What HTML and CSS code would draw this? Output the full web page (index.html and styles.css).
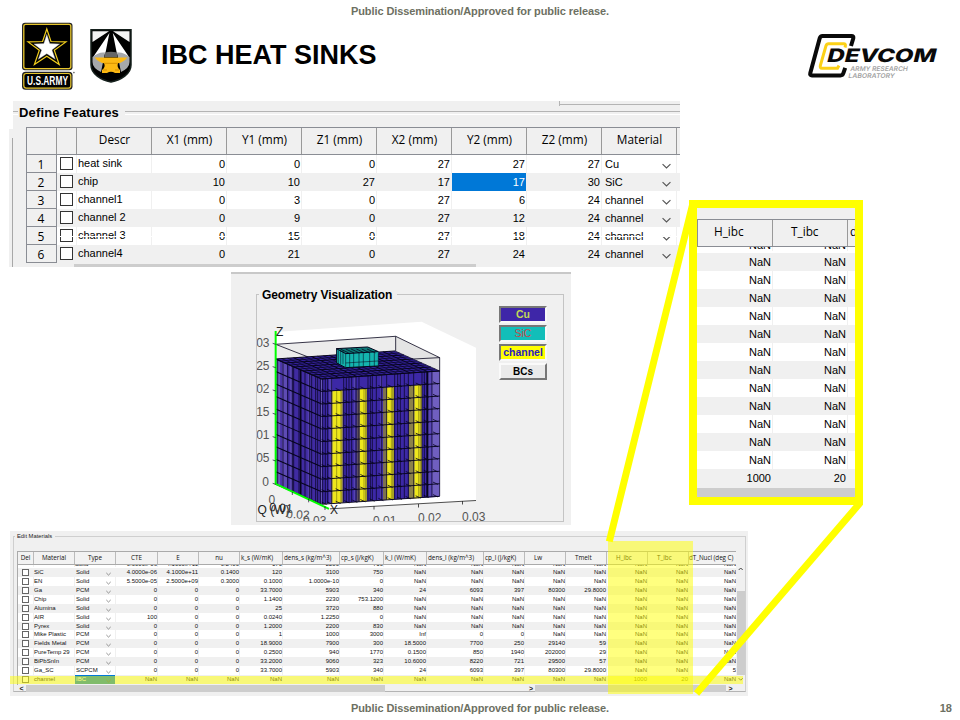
FILE: index.html
```
<!DOCTYPE html>
<html lang="en">
<head>
<meta charset="utf-8">
<title>IBC Heat Sinks</title>
<link rel="stylesheet" href="styles.css">
</head>
<body>
<div class="slide">
  <header class="header">
    <p class="release">Public Dissemination/Approved for public release.</p>
    <div class="banner">
      <svg class="army" width="54" height="70" viewBox="21 21 54 70">
        <rect x="22" y="22.7" width="50.5" height="47.6" rx="3" fill="#222"/>
        <rect x="23.8" y="24.4" width="47" height="44.2" rx="2" fill="#000" stroke="#e6c52c" stroke-width="1.3"/>
        <polygon points="46.8,29 51,41.5 66,41.9 54.3,50.3 59.2,64.5 46.8,56.2 34.4,64.5 39.3,50.3 28,41.9 42.6,41.5" fill="#000" stroke="#f0cd1c" stroke-width="1.2"/>
        <polygon points="46.8,34.3 49.8,43.6 59.7,43.9 52,49.9 55.3,59.3 46.8,53.8 38.3,59.3 41.6,49.9 33.9,43.9 43.8,43.6" fill="#fff" stroke="#999" stroke-width=".4"/>
        <rect x="22" y="71.8" width="50.5" height="18" rx="3.5" fill="#222"/>
        <rect x="23.8" y="73.5" width="47" height="14.6" rx="2.5" fill="#000" stroke="#e6c52c" stroke-width="1.2"/>
        <text x="27" y="84.9" class="army-text" textLength="41" lengthAdjust="spacingAndGlyphs">U.S.ARMY</text>
        <circle cx="73.9" cy="72.6" r=".8" fill="#555"/>
      </svg>
      <svg class="shield" width="44" height="56" viewBox="89 28 44 56">
        <path d="M91 29.7H131V65C131 74 121 80 111 82C101 80 91 74 91 65Z" fill="#000" stroke="#16211d" stroke-width="1.5"/>
        <path d="M92.5 31.2H109L92.5 42Z M113 31.2H129.5V42Z" fill="#f4f4f4"/>
        <path d="M109.4 33L105.2 54.3Q98 54.2 93.5 56.5Z M112.8 33L117 54.3Q124 54.2 128.7 56.5Z" fill="#fff"/>
        <path d="M92.5 57Q99 51.5 105 52.6L101 72Q92.5 68 92.5 62Z M129.5 57Q123 51.5 117 52.6L121 72Q129.5 68 129.5 62Z" fill="#a6a8ab"/>
        <path d="M105 52.5Q111 51.2 117 52.5L117.6 57H104.4Z" fill="#666"/>
        <path d="M94.5 57.5H127.5Q123 62.7 118 63.3Q116.5 67 120 70V73H115Q111 70.5 107 73H102V70Q106 67 104 63.3Q99 62.7 94.5 57.5Z" fill="#fdb913"/>
        <path d="M104 63.3H118M103 70H107M115 70H119" stroke="#d79000" fill="none"/>
      </svg>
      <h1 class="title">IBC HEAT SINKS</h1>
      <svg class="devcom" width="132" height="46" viewBox="807 33 132 46">
        <path d="M851 46L853.3 38.3Q853.8 36 851.5 36H822.5Q820.3 36 819.7 38.3L810.3 73Q809.6 75.4 812 75.4H840.5Q842.7 75.4 843.4 73L845.2 67.8" fill="none" stroke="#0a0a0a" stroke-width="4"/>
        <path d="M845 47.5L845.4 46Q845.8 43.8 843.8 43.8H828.6Q826.6 43.8 826 45.8L820.4 65.4Q819.7 68.3 822 68.3H837.5L839 65.5" fill="none" stroke="#fcd116" stroke-width="3"/>
        <rect x="827.5" y="48.3" width="18" height="15" fill="#fff"/>
        <g transform="translate(826 62.3) skewX(-14)"><text class="devcom-text" textLength="109" lengthAdjust="spacingAndGlyphs">DEVCOM</text></g>
        <g transform="translate(850 71.1) skewX(-10)"><text class="lab-text" textLength="57.5" lengthAdjust="spacingAndGlyphs">ARMY RESEARCH</text></g>
        <g transform="translate(848 77.8) skewX(-10)"><text class="lab-text" textLength="46.5" lengthAdjust="spacingAndGlyphs">LABORATORY</text></g>
      </svg>
    </div>
  </header>

  <main>
    <section class="features">
      <h2 class="legend">Define Features</h2>
      <div class="ftable" id="features"></div>
      <div class="fscroll"><i></i></div>
    </section>

    <section class="geometry">
      <div class="frame">
        <h2 class="legend">Geometry Visualization</h2>
        <svg id="plot" class="plot" width="235" height="226" viewBox="257 294 235 226">
          <polygon points="275,331 421.6,320.7 476,346.7 476,499.5 330,508 275,484" fill="#fff"/>
          <g id="mesh" transform="translate(255 317.3) scale(.33333)"></g>
          <g class="axis">
            <path d="M330 507.8L476 499.5M374 505v3.5M418.5 503v3.5M462.5 500v3.5" stroke="#222" fill="none" stroke-width=".8"/>
            <g text-anchor="end">
              <text x="269.5" y="345.5">0.03</text><text x="269.5" y="368.5">0.025</text>
              <text x="269.5" y="391.5">0.02</text><text x="269.5" y="414.5">0.015</text>
              <text x="269.5" y="438">0.01</text><text x="269.5" y="461">0.005</text>
              <text x="269" y="485">0</text>
            </g>
            <text x="276" y="335" class="dark">Z</text><text x="330" y="513" class="dark">X</text>
            <text x="268.5" y="502.5">0</text>
            <text x="257.5" y="512.5" class="dark">Q (W)</text>
            <text x="269" y="510" class="dark" transform="rotate(4 269 510)">0.01</text>
            <text x="286" y="517" transform="rotate(3 286 517)">0.02</text>
            <text x="303" y="523.5">0.03</text>
            <text x="373" y="523.5">0.01</text><text x="418" y="521">0.02</text><text x="462" y="519.5">0.03</text>
          </g>
        </svg>
        <div class="keys">
          <button class="key cu">Cu</button>
          <button class="key sic">SiC</button>
          <button class="key channel">channel</button>
          <button class="key bcs">BCs</button>
        </div>
      </div>
    </section>

    <section class="materials">
      <h2 class="mlegend">Edit Materials</h2>
      <div class="mbody">
        <div class="mtable" id="materials"></div>
        <div class="vscroll"><svg width="9" height="125" viewBox="0 0 9 125"><path d="M2.7 11l2-2 2 2M2.7 119.2l2 2 2-2" stroke="#444" fill="none"/></svg><i></i></div>
      </div>
      <div class="hscroll"><b>&lt;</b><i class="t1"></i><b class="mid">&gt;</b><i class="t2"></i><b>&gt;</b></div>
      <div class="hl-row"></div>
      <div class="hl-col"></div>
    </section>
  </main>

  <footer class="footer"><p class="release">Public Dissemination/Approved for public release.</p><span class="page">18</span></footer>

  <svg class="leaders" width="960" height="720" viewBox="0 0 960 720">
    <path d="M692.5 205L609.3 541.5M860 503L696.5 693.5" stroke="#ff0" stroke-width="7" fill="none"/>
  </svg>
  <aside class="callout" id="callout"></aside>
</div>
<script src="app.js"></script>
</body>
</html>
```
FILE: styles.css
```
* { box-sizing: border-box; }
body { margin: 0; background: #fff; font-family: "Liberation Sans", Arial, sans-serif; color: #000; }
h1, h2, p { margin: 0; }
.slide { position: relative; width: 960px; height: 720px; overflow: hidden; display: flex; flex-direction: column; }

.header { height: 101px; }
.release { text-align: center; font: bold 11px/14px "Liberation Sans", sans-serif; color: #6d7062; letter-spacing: -.1px; padding-top: 4px; }
.banner { display: flex; padding: 3px 21px 0; align-items: flex-start; }
.shield { margin: 7px 0 0 14px; }
.title { flex: 1; margin-left: 28px; padding-top: 17px; font: bold 27px/34px "Liberation Sans", sans-serif; white-space: nowrap; }
.devcom { margin-top: 12px; }
.army-text { font: bold 12px "Liberation Sans", sans-serif; fill: #fff; }
.devcom-text { font: 800 18.5px Inter, sans-serif; fill: #0a0a0a; }
.lab-text { font: 600 6.6px Inter, sans-serif; fill: #a3a3a3; }

.legend { position: absolute; background: #f0f0f0; font: bold 13px/16px "Liberation Sans", sans-serif; white-space: nowrap; }

.features { position: relative; width: 667px; height: 166px; margin-left: 13px; padding: 26px 0 0 13px; background: linear-gradient(#b4b4b4, #b4b4b4) 547px 3px / 120px 1px no-repeat, linear-gradient(#b4b4b4, #b4b4b4) 546px 0 / 1px 5px no-repeat, #f0f0f0; }
.features::before { content: ""; position: absolute; left: 0; right: 0; top: 10px; height: 2px; border-top: 1px solid #b4b4b4; border-bottom: 1px solid #fff; }
.features::after { content: ""; position: absolute; left: -4px; top: 28px; width: 4px; height: 138px; background: linear-gradient(#f0f0f0 9px, transparent 9px), linear-gradient(90deg, #f0f0f0 3px, #a8a8a8 3px); }
.features .legend { left: 5px; top: 4px; padding: 0 6px 0 1px; letter-spacing: .16px; }
.ftable { border-top: 1px solid #8a8d94; border-left: 1px solid #8a8d94; overflow: hidden; }
.frow { display: grid; grid-template-columns: 30px 20px repeat(7, 75px) 75px 4px; grid-template-rows: 100%; height: 18px; font-size: 11px; line-height: 18px; background: #fff; }
.frow > span { border-right: 1px solid #f0f0f0; padding-right: 1px; text-align: right; white-space: nowrap; }
.frow:nth-child(odd) { background: #f0f0f0; }
.frow.head { height: 27px; background: #f0f0f0; border-bottom: 1px solid #8a8d94; font: 11.8px/22px "Open Sans", sans-serif; }
.frow.head > span { text-align: center; border-color: #999; padding: 0 0 0 1px; }
.frow > .num { background: #f0f0f0; border-right: 1px solid #8a8d94; border-bottom: 1px solid #8a8d94; text-align: center; font: 12px/19px "Open Sans", sans-serif; }
.frow > .left { text-align: left; padding-left: 1px; line-height: 17px; }
.box { display: block; width: 13px; height: 13px; margin: 2px 0 0 3px; border: 1px solid #333; background: #fff; }
.frow > .mat { display: flex; justify-content: space-between; padding: 0 5px 0 3px; }
.mat svg { margin-top: 8px; }
.frow > .sel { background: #0078d7; color: #fff; }
.frow.cut { position: relative; background: #fff; }
.frow.cut::after { content: ""; position: absolute; left: 30px; right: 0; top: 9px; height: 1px; background: #fff; }
.fscroll { height: 3px; margin-top: 1px; }
.fscroll i { display: block; width: 402px; height: 3px; margin-left: 48px; background: #cdcdcd; }

.geometry { width: 340px; height: 253px; margin: 5px 0 0 231px; padding: 21px 0 0 25px; background: #f0f0f0; border-top: 2px solid #c8c8c8; }
.frame { position: relative; width: 308px; height: 228px; margin-top: -1px; border: 1px solid #c4c4c4; display: flex; }
.geometry .legend { left: 2px; top: -8px; padding: 0 5px 0 3px; font-size: 12px; letter-spacing: -.1px; }
.plot { display: block; flex: none; }
.axis text { font: 12px "Liberation Sans", sans-serif; fill: #555; }
.axis text.dark { fill: #222; }
.keys { display: flex; flex-direction: column; gap: 2px; padding: 11px 0 0 7px; }
.key { width: 48px; height: 17px; padding: 0; border: 2px solid; border-color: #777 #f8f8f8 #f8f8f8 #777; font: bold 10.5px/13px "Liberation Sans", sans-serif; }
.cu { background: #3e26a8; color: #c1d956; }
.sic { background: #12beb9; color: #c84a4a; font-weight: normal; }
.channel { background: #ff0; color: #2a1ac0; }
.bcs { background: #eaeaea; border-color: #fafafa #777 #777 #fafafa; font-size: 10px; }

.materials { position: relative; width: 738px; height: 165px; margin: 6px 0 0 10px; padding: 20px 3px 0 7px; background: #f0f0f0; }
.materials::before { content: ""; position: absolute; left: 3px; right: 2px; top: 5px; bottom: 4px; border: 1px solid #cfcfcf; border-bottom-color: #b4b4b4; }
.mlegend { position: absolute; left: 5px; top: 1px; padding: 0 3px 0 2px; background: #f0f0f0; font: 5.8px/9px "Liberation Sans", sans-serif; color: #222; }
.mbody { position: relative; display: flex; height: 134px; }
.mtable { width: 719px; border-top: 1px solid #aaa; border-left: 1px solid #aaa; overflow: hidden; }
.mrow { display: grid; grid-template-columns: 16px 41px 41px 42px 41px 41px 43px 57px 44px 43px 57px 41px 41px 41px 41px 41px 48px; grid-template-rows: 100%; height: 8.93px; font-size: 6px; line-height: 9px; color: #111; background: #fff; }
.mrow > span { border-right: 1px solid #f0f0f0; text-align: right; white-space: nowrap; }
.mrow:nth-child(odd) { background: #f0f0f0; }
.mrow.mhead { height: 13px; background: #f2f2f2; border-bottom: 1px solid #aaa; font: 6.3px/11px "Open Sans", sans-serif; }
.mhead > span { text-align: center; border-color: #bbb; }
.mhead > span:nth-child(n+7) { text-align: left; padding-left: 1px; }
.mhead > span:nth-child(n+13) { padding-left: 9px; }
.mrow.mhead > span:last-child { padding-left: 0; letter-spacing: -.05px; }
.mrow.partial { height: 3px; overflow: hidden; }
.mrow.partial > span { line-height: 0; height: 3px; transform: translateY(-1px); }
.mrow > .l { text-align: left; padding-left: 0; line-height: 8px; }
.mrow > .type { display: flex; justify-content: space-between; padding: 0 4px 0 1px; }
.type svg { margin-top: 4px; }
.mrow > .type.ibc { background: #0078d7; color: #fff; line-height: 9px; }
.mbox { display: block; width: 7px; height: 7px; margin: 1px 0 0 4px; border: 1px solid #666; background: #fff; }
.vscroll { position: relative; width: 9px; padding-top: 8px; }
.vscroll svg { display: block; }
.vscroll i { position: absolute; left: 1px; width: 8px; top: 40px; height: 84px; background: #cdcdcd; }
.hscroll { position: relative; display: flex; height: 7px; width: 719px; font: 7px/7px "Liberation Sans", sans-serif; color: #222; align-items: stretch; }
.hscroll b { width: 9px; text-align: center; }
.hscroll i { background: #cdcdcd; }
.t1 { width: 359px; }
.hscroll .mid { width: 150px; text-align: right; padding-right: 2px; }
.t2 { width: 191px; }
.hl-row { position: absolute; left: 0; top: 145px; width: 733px; height: 8px; background: rgba(255,255,0,.5); }
.hl-col { position: absolute; left: 598px; top: 10px; width: 85px; height: 153px; background: rgba(255,255,0,.5); }

.footer { position: relative; margin-top: 1px; }
.page { position: absolute; right: 8px; top: 4px; font: bold 11px/14px "Liberation Sans", sans-serif; color: #6d7062; }

.leaders { position: absolute; left: 0; top: 0; pointer-events: none; }
.callout { position: absolute; left: 689px; top: 200px; width: 174px; height: 305px; border: 8px solid #ff0; background: #f0f0f0; padding-top: 11px; overflow: hidden; }
.crow { display: grid; grid-template-columns: 76px 75px 20px; grid-template-rows: 100%; height: 18px; font-size: 11px; line-height: 19px; background: #fff; }
.crow > span { border-right: 1px solid #f0f0f0; padding-right: 1px; text-align: right; }
.crow:nth-child(odd) { background: #f0f0f0; }
.crow.chead { grid-template-columns: 75px 75px 20px; height: 28px; background: #f0f0f0; border: 1px solid #8a8d94; border-right: 0; font: 11.8px/22px "Open Sans", sans-serif; }
.chead > span { border-color: #999; }
.crow.chead > span { text-align: left; padding-left: 16px; }
.crow.chead > span:nth-child(2) { padding-left: 18px; }
.crow.chead > span:last-child { padding-left: 2px; }
.crow.cpart { height: 6px; overflow: hidden; }
.crow.cpart > span { line-height: 0; height: 6px; transform: translateY(-2px); }
.cbar { height: 10px; background: #cdcdcd; border-top: 1px solid #f0f0f0; }
```
FILE: app.js
```
const byId = id => document.getElementById(id);
const cell = (t, c) => `<span${c ? ` class="${c}"` : ''}>${t}</span>`;
const chevron = (w, h) => `<svg width="${w}" height="${h}" viewBox="0 0 8 5"><path d="M.5 .8L4 4.2L7.5 .8" fill="none" stroke="#555" stroke-width="1"/></svg>`;

// Feature table
const features = [
  ['heat sink', 0, 0, 0, 27, 27, 27, 'Cu'],
  ['chip', 10, 10, 27, 17, 17, 30, 'SiC'],
  ['channel1', 0, 3, 0, 27, 6, 24, 'channel'],
  ['channel 2', 0, 9, 0, 27, 12, 24, 'channel'],
  ['channel 3', 0, 15, 0, 27, 18, 24, 'channel'],
  ['channel4', 0, 21, 0, 27, 24, 24, 'channel']
];
byId('features').innerHTML =
  '<div class="frow head">' + ['', '', 'Descr', 'X1 (mm)', 'Y1 (mm)', 'Z1 (mm)', 'X2 (mm)', 'Y2 (mm)', 'Z2 (mm)', 'Material', ''].map(t => cell(t)).join('') + '</div>' +
  features.map((r, i) => `<div class="frow${i === 4 ? ' cut' : ''}">` + cell(i + 1, 'num') + cell('<i class="box"></i>') + cell(r[0], 'left') +
    r.slice(1, 7).map((v, j) => cell(v, i === 1 && j === 4 ? 'sel' : '')).join('') +
    cell(r[7] + chevron(9, 6), 'mat') + cell('') + '</div>').join('');

// Material table
const N = 'NaN';
const heads = ['Del', 'Material', 'Type', 'CTE', 'E', 'nu', 'k_s (W/mK)', 'dens_s (kg/m^3)', 'cp_s (J/kgK)', 'k_l (W/mK)', 'dens_l (kg/m^3)', 'cp_l (J/kgK)', 'Lw', 'Tmelt', 'H_ibc', 'T_ibc', 'dT_Nucl (deg C)'];
const materials = [
  ['SiC', 'Solid', '4.0000e-06', '4.1000e+11', '0.1400', '120', '3100', '750', N, N, N, N, N, N, N, N],
  ['EN', 'Solid', '5.5000e-05', '2.5000e+09', '0.3000', '0.1000', '1.0000e-10', '0', N, N, N, N, N, N, N, N],
  ['Ga', 'PCM', 0, 0, 0, '33.7000', 5903, 340, 24, 6093, 397, 80300, '29.8000', N, N, N],
  ['Chip', 'Solid', 0, 0, 0, '1.1400', 2230, '753.1200', N, N, N, N, N, N, N, N],
  ['Alumina', 'Solid', 0, 0, 0, 25, 3720, 880, N, N, N, N, N, N, N, N],
  ['AIR', 'Solid', 100, 0, 0, '0.0240', '1.2250', 0, N, N, N, N, N, N, N, N],
  ['Pyrex', 'Solid', 0, 0, 0, '1.2000', 2200, 830, N, N, N, N, N, N, N, N],
  ['Mike Plastic', 'PCM', 0, 0, 0, 1, 1000, 3000, 'Inf', 0, 0, N, N, N, N, N],
  ['Fields Metal', 'PCM', 0, 0, 0, '18.9000', 7900, 300, '18.5000', 7700, 250, 29140, 59, N, N, N],
  ['PureTemp 29', 'PCM', 0, 0, 0, '0.2500', 940, 1770, '0.1500', 850, 1940, 202000, 29, N, N, N],
  ['BiPbSnIn', 'PCM', 0, 0, 0, '33.2000', 9060, 323, '10.6000', 8220, 721, 29500, 57, N, N, N],
  ['Ga_SC', 'SCPCM', 0, 0, 0, '33.7000', 5903, 340, 24, 6093, 397, 80300, '29.8000', N, N, 5],
  ['channel', 'IBC', N, N, N, N, N, N, N, N, N, N, N, 1000, 20, N]
];
byId('materials').innerHTML =
  '<div class="mrow mhead">' + heads.map(t => cell(t)).join('') + '</div>' +
  '<div class="mrow partial">' + cell('') + cell('') + cell('Solid', 'l') + ['0.0000e-06', '4.1000e+11', '0.2400', '170', '2200', '710', N, N, N, N, N, N, N, N].map(t => cell(t)).join('') + '</div>' +
  materials.map(r => '<div class="mrow">' + cell('<i class="mbox"></i>') + cell(r[0], 'l') +
    cell(r[1] + chevron(5, 4), r[1] === 'IBC' ? 'type ibc' : 'type') + r.slice(2).map(v => cell(v)).join('') + '</div>').join('');

// Callout
byId('callout').innerHTML =
  '<div class="crow chead">' + cell('H_ibc') + cell('T_ibc') + cell('d') + '</div>' +
  '<div class="crow cpart">' + cell(N) + cell(N) + cell('') + '</div>' +
  Array.from({ length: 13 }, (_, i) => '<div class="crow">' + cell(i === 12 ? 1000 : N) + cell(i === 12 ? 20 : N) + cell('') + '</div>').join('') +
  '<div class="cbar"></div>';

// Finite element mesh
const A = [62, 122], B = [420, 98], C = [554, 158], D = [200, 182], H = 375;
const mix = (p, q, t) => [p[0] + (q[0] - p[0]) * t, p[1] + (q[1] - p[1]) * t];
const poly = (pts, fill, extra = '') => `<polygon points="${pts.map(p => p.join()).join(' ')}" fill="${fill}" ${extra}/>`;
const line = (p, q, w = 2.4, c = '#06041c') => `<path d="M${p}L${q}" stroke="${c}" stroke-width="${w}"/>`;
const down = (p, h) => [p[0], p[1] + h];
let m = '';
m += poly([[62, 78], [422, 54], [422, 98], [62, 122]], '#ececec') + poly([[422, 54], [554, 118], [554, 158], [422, 98]], '#e4e4e4');
m += line([62, 78], [422, 54]) + line([422, 54], [554, 118]) + line([554, 118], [554, 158]) + line([422, 54], [422, 98]) + line([62, 78], [190, 128]) + line([554, 118], [440, 124]);
m += poly([A, D, down(D, H), down(A, H)], '#402ba2') + poly([D, C, down(C, H + 2), down(D, H)], '#3c28a6') + poly([A, B, C, D], '#33219a');
// lighter cells near the outer edges
[[64, 76, .6], [80, 96, .4], [104, 112, .35], [158, 166, .25]].forEach(([a, b, o]) => {
  const p = mix(A, D, (a - 62) / 138), q = mix(A, D, (b - 62) / 138);
  m += poly([p, q, down(q, H), down(p, H)], '#8b7cd0', `opacity="${o}"`);
});
[[518, 528, .35], [530, 552, .6], [222, 232, .25], [296, 302, .3], [376, 382, .3]].forEach(([a, b, o]) => {
  const p = mix(D, C, (a - 200) / 354), q = mix(D, C, (b - 200) / 354);
  m += poly([p, q, down(q, H), down(p, H)], '#9284d2', `opacity="${o}"`);
});
// coolant channels
[[232, 262, 229, '#968b55'], [314, 336, 305, '#5b4c62'], [396, 417, 384, '#7c7150'], [478, 500, 462, '#8c824a']].forEach(([a, b, s, c]) => {
  const y0 = x => 38 + 182 - (x - 200) * .068, yb = x => 557 - (x - 200) * .06;
  m += poly([[s, y0(s)], [a, y0(a)], [a, yb(a)], [s, yb(s)]], c);
  m += poly([[a, y0(a)], [b, y0(b)], [b, yb(b)], [a, yb(a)]], '#eee71c');
  m += poly([[b - 6, y0(b)], [b, y0(b)], [b, yb(b)], [b - 6, yb(b)]], '#a69f22');
  m += line([a + 13, y0(a)], [a + 13, yb(a)], 1.4, '#55500a');
});
// vertical edges
[68, 84, 98, 112, 116, 132, 137, 150, 164, 170, 182, 188, 196].forEach(x => {
  const p = mix(A, D, (x - 62) / 138); m += line(p, down(p, H), x === 137 ? 5 : 2.2);
});
[203, 211, 218, 230, 266, 274, 282, 290, 303, 312, 339, 346, 352, 364, 380, 395, 419, 428, 436, 448, 460, 476, 501, 508, 517, 531, 554].forEach(x => {
  const p = mix(D, C, (x - 200) / 354); m += line(p, down(p, H), x === 517 ? 6 : 2.1);
});
// layer edges, with the stepped shadow at each element
for (let k = 0; k <= 10; k++) {
  const y = k * 37.6;
  m += line(down(A, y), down(D, y), 3.2) + line(down(D, y), down(C, y), 2.8);
  if (k) [206, 222, 248, 274, 298, 322, 350, 376, 404, 432, 458, 488, 512, 540].forEach(x => {
    const p = down(mix(D, C, (x - 200) / 354), y);
    m += line([p[0] - 6, p[1] - 6], [p[0] + 9, p[1] + 1], 2.4);
  });
}
// top face
for (let i = 0; i <= 10; i++) m += line(mix(A, D, i / 10), mix(B, C, i / 10), i % 2 ? 2 : 3);
for (let i = 0; i <= 20; i++) m += line(mix(A, B, i / 20), mix(D, C, i / 20), i % 3 ? 2 : 3);
// chip
m += poly([[244, 91], [338, 86], [370, 100], [370, 143], [272, 148], [245, 134]], '#14b4ae') + poly([[244, 91], [338, 86], [370, 100], [272, 106]], '#0c7a77');
[250, 257, 264, 272, 284, 296, 312, 325, 344, 358, 370].forEach(x => { m += line([x, x < 272 ? 96 : 104], [x, x < 272 ? 138 : 146], 1.6); });
m += line([244, 91], [338, 86], 3) + line([272, 106], [370, 100], 3) + line([244, 91], [272, 106], 3) + line([338, 86], [370, 100], 3) + line([245, 134], [272, 148], 3) + line([272, 148], [370, 143], 3) + line([272, 134], [370, 128], 1.6) + line([245, 91], [245, 134], 3);
for (let x = 256; x < 340; x += 16) m += line([x, 92], [x + 25, 104], 2.2);
// axes and ticks
m += line([62, 38], [62, 499], 6, '#0f0') + line([62, 497], [222, 572], 6, '#0f0');
for (let k = 0; k < 7; k++) m += line([53, 75 + k * 70], [62, 78 + k * 70], 2);
m += line([112, 521], [112, 530], 2) + line([161, 542], [161, 552], 2) + line([210, 564], [210, 575], 2);
byId('mesh').innerHTML = m;
```
